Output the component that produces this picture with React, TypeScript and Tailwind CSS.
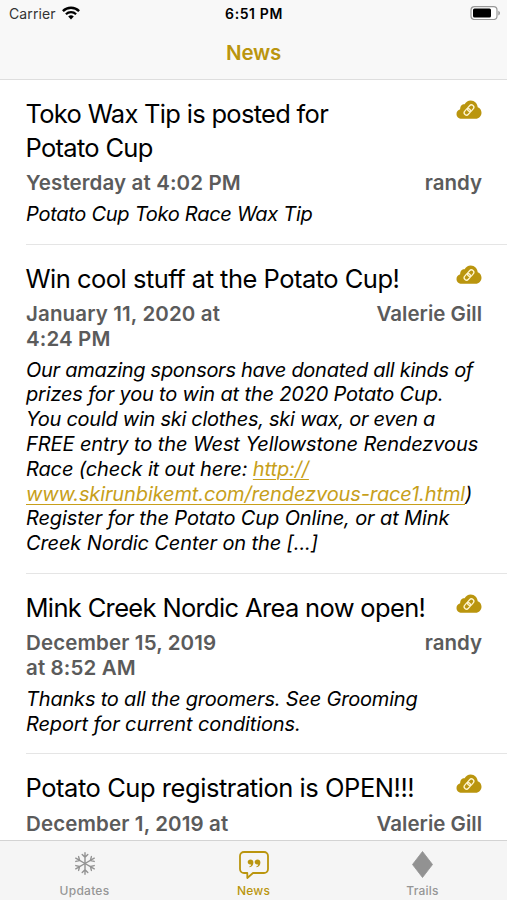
import React from 'react';

interface NewsItem {
  id: number;
  title: string[];
  titleTracking: string;
  date: string[];
  author: string;
  body: React.ReactNode[];
}

const link = 'text-[#c79f1b] underline decoration-1 underline-offset-[3px]';

const items: NewsItem[] = [
  {
    id: 1,
    title: ['Toko Wax Tip is posted for', 'Potato Cup'],
    titleTracking: 'tracking-[-0.7px]',
    date: ['Yesterday at 4:02 PM'],
    author: 'randy',
    body: [<span className="tracking-[-0.27px]">Potato Cup Toko Race Wax Tip</span>],
  },
  {
    id: 2,
    title: ['Win cool stuff at the Potato Cup!'],
    titleTracking: 'tracking-[-0.51px]',
    date: ['January 11, 2020 at', '4:24 PM'],
    author: 'Valerie Gill',
    body: [
      <span className="tracking-[-0.28px]">Our amazing sponsors have donated all kinds of</span>,
      <span className="tracking-[-0.18px]">prizes for you to win at the 2020 Potato Cup.</span>,
      <span className="tracking-[-0.27px]">You could win ski clothes, ski wax, or even a</span>,
      <span className="tracking-[-0.09px]">FREE entry to the West Yellowstone Rendezvous</span>,
      <>Race (check it out here: <span className={link}>http://</span></>,
      <><span className={link}>www.skirunbikemt.com/rendezvous-race1.html</span>)</>,
      'Register for the Potato Cup Online, or at Mink',
      'Creek Nordic Center on the [...]',
    ],
  },
  {
    id: 3,
    title: ['Mink Creek Nordic Area now open!'],
    titleTracking: 'tracking-[-0.66px]',
    date: ['December 15, 2019', 'at 8:52 AM'],
    author: 'randy',
    body: [
      <span className="tracking-[-0.19px]">Thanks to all the groomers. See Grooming</span>,
      'Report for current conditions.',
    ],
  },
  {
    id: 4,
    title: ['Potato Cup registration is OPEN!!!'],
    titleTracking: 'tracking-[-0.45px]',
    date: ['December 1, 2019 at'],
    author: 'Valerie Gill',
    body: [],
  },
];

const Lines: React.FC<{ lines: React.ReactNode[] }> = ({ lines }) => (
  <>
    {lines.map((line, idx) => (
      <span key={idx} className="block whitespace-nowrap">
        {line}
      </span>
    ))}
  </>
);

const CloudLink = () => (
  <svg viewBox="0 0 26 20" className="mt-[2px] h-5 w-[26px] shrink-0">
    <path
      d="M5.8 19.8C2.7 19.8.5 17.800.5 15c0-2.400 1.500-4.200 3.700-4.800C4 7 6.200 5 8.600 5.200 9.900 2.700 12.100 1.400 14.700 1.400c3.900 0 6.800 2.900 7 6.900 2.300.8 3.800 2.900 3.800 5.500 0 3.300-2.600 6-5.900 6z"
      fill="#ba950e"
    />
    <g transform="rotate(-48 13 11)" fill="none" stroke="#fff5cf" strokeWidth="1.300" strokeLinecap="round">
      <rect x="7" y="8.600" width="7" height="4.800" rx="2.400" />
      <rect x="12" y="8.600" width="7" height="4.800" rx="2.400" />
    </g>
  </svg>
);

const StatusBar = () => (
  <div className="grid h-[27px] grid-cols-3 items-center pr-[6px] pl-[9px] text-[14px] leading-none">
    <div className="flex items-center gap-[6px]">
      <span className="tracking-[0.1px] text-[#333]">Carrier</span>
      <svg viewBox="0 0 18 14" className="mt-[-2px] h-[14px] w-[18px]">
        <path d="M.9 5.100a11.500 11.500 0 0 1 16.200 0" fill="none" stroke="#000" strokeWidth="2.400" />
        <path d="M3.900 8.300a7.300 7.300 0 0 1 10.200 0" fill="none" stroke="#000" strokeWidth="2.200" />
        <path d="M6.200 10.600a4 4 0 0 1 5.600 0L9 13.500z" />
      </svg>
    </div>
    <span className="-ml-[2px] text-center font-semibold tracking-[0.6px]">6:51 PM</span>
    <svg viewBox="0 0 31 14" className="-mt-px h-[14px] w-[31px] justify-self-end">
      <rect x="1" y=".7" width="26" height="12.800" rx="3.500" fill="#fff" stroke="#999" strokeWidth="1.200" />
      <rect x="3" y="2.600" width="18" height="9" rx="1.500" />
      <path d="M28.300 4.800c2.200.8 2.200 3.800 0 4.600z" fill="#999" />
    </svg>
  </div>
);

const NewsRow: React.FC<{ item: NewsItem }> = ({ item }) => (
  <article className="ml-[26px] border-b border-[#e5e5e5] pt-[17px] pb-[17px]">
    <div className="flex items-start justify-between pr-[25px]">
      <h2 className={`-ml-[0.5px] text-[25.500px] leading-[34px] ${item.titleTracking}`}>
        <Lines lines={item.title} />
      </h2>
      <CloudLink />
    </div>
    <div className="mt-[6.300px] flex items-start justify-between pr-[25px] text-[20.500px] leading-[24.500px] font-semibold text-[#5b5b5b]">
      <p className="tracking-[0.13px]">
        <Lines lines={item.date} />
      </p>
      <p>{item.author}</p>
    </div>
    <div className="mt-[6.400px] text-[20px] leading-[24.800px] tracking-[-0.12px] italic">
      <Lines lines={item.body} />
    </div>
  </article>
);

const TabBar = () => (
  <nav className="grid h-[60px] shrink-0 grid-cols-3 border-t border-[#d3d3d3] bg-[#f5f5f5] text-[12px] leading-[14px] font-medium text-[#969696]">
    <div className="flex flex-col items-center pt-[7px]">
      <svg viewBox="0 0 32 32" className="h-8 w-8" fill="none" stroke="#929292" strokeWidth="1.400" strokeLinecap="round">
        {[0, 60, 120, 180, 240, 300].map((angle) => (
          <path key={angle} transform={`rotate(${angle} 16 15.500)`} d="M16 15.500V4.800M13.200 6.500 16 9.300l2.800-2.800" />
        ))}
      </svg>
      <span className="mt-[4px] tracking-[0.25px]">Updates</span>
    </div>
    <div className="flex flex-col items-center pt-[7px] text-[#ba950e]">
      <svg viewBox="0 0 32 32" className="h-8 w-8">
        <path
          d="M6 4h20a4 4 0 0 1 4 4v13a4 4 0 0 1-4 4H15L9.300 30v-5H6a4 4 0 0 1-4-4V8a4 4 0 0 1 4-4z"
          fill="none"
          stroke="currentColor"
          strokeWidth="1.800"
          strokeLinejoin="round"
        />
        <path
          d="M12.500 11.500c1.800 0 2.900 1.200 2.900 3 0 2.600-1.500 4.300-3.900 4.800l-.3-.8c1.200-.5 1.900-1.200 2-2.100-2.200.4-3.500-.7-3.500-2.300s1.200-2.600 2.800-2.600zM19.500 11.500c1.800 0 2.900 1.200 2.900 3 0 2.600-1.500 4.300-3.900 4.800l-.3-.8c1.200-.5 1.900-1.200 2-2.100-2.200.4-3.500-.7-3.500-2.300s1.200-2.600 2.800-2.600z"
          fill="currentColor"
        />
      </svg>
      <span className="mt-[4px] tracking-[0.2px]">News</span>
    </div>
    <div className="flex flex-col items-center pt-[7px]">
      <svg viewBox="0 0 32 32" className="h-8 w-8">
        <path d="M15.500 3.500 25.500 16.500 15.500 29.500 5.500 16.500z" fill="#929292" stroke="#929292" strokeWidth=".8" strokeLinejoin="round" />
      </svg>
      <span className="mt-[4px] tracking-[0.2px]">Trails</span>
    </div>
  </nav>
);

const App: React.FC = () => {
  return (
    <div className="flex h-[900px] w-[507px] flex-col overflow-hidden bg-white font-['Inter','Liberation_Sans',sans-serif] text-black">
      <header className="h-[80px] shrink-0 border-b border-[#dedede] bg-[#f8f8f8]">
        <StatusBar />
        <h1 className="mt-[12px] text-center text-[20.500px] leading-7 font-semibold tracking-[-0.25px] text-[#ba950e]">News</h1>
      </header>
      <main className="min-h-0 flex-1 overflow-hidden">
        {items.map((item) => (
          <NewsRow key={item.id} item={item} />
        ))}
      </main>
      <TabBar />
    </div>
  );
};

export default App;
